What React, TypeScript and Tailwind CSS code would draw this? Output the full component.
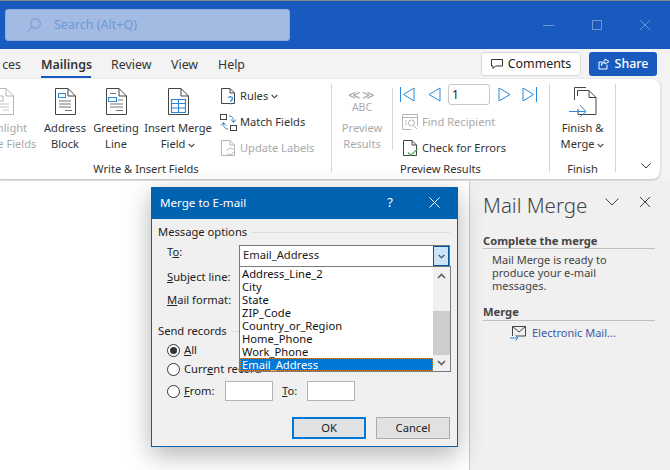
import React from 'react';

const DocIcon = ({ children, stroke = '#444' }: { children?: React.ReactNode; stroke?: string }) => (
  <svg width="21" height="27" viewBox="0 0 21 27" fill="none">
    <path d="M.5.5H13L20.5 8V26.5H.5Z" fill="#fff" stroke={stroke} />
    <path d="M13 .5V8H20.5" stroke={stroke} />
    {children}
  </svg>
);

const SmallDoc = ({ children, stroke = '#444' }: { children?: React.ReactNode; stroke?: string }) => (
  <svg width="17" height="17" viewBox="0 0 17 17" fill="none">
    <path d="M1.5.5H10L14.5 5V15.5H1.5Z" stroke={stroke} fill="#fff" />
    <path d="M10 .5V5H14.5" stroke={stroke} />
    {children}
  </svg>
);

const Caret = ({ color = '#444' }: { color?: string }) => (
  <svg width="7" height="5" viewBox="0 0 7 5" fill="none" className="inline-block">
    <path d="M.7 1L3.5 3.8 6.3 1" stroke={color} strokeWidth="1.1" />
  </svg>
);

const BigButton = ({ width, icon, lines, disabled }: { width: string; icon: React.ReactNode; lines: React.ReactNode[]; disabled?: boolean }) => (
  <div className={`${width} shrink-0 flex flex-col items-center pt-[9px] leading-[16px] ${disabled ? 'text-[#a9a9a9]' : 'text-[#333]'}`}>
    <div className="h-[27px]">{icon}</div>
    <div className="mt-[5px] flex flex-col items-center whitespace-nowrap">
      {lines.map((line, i) => (
        <span key={i}>{line}</span>
      ))}
    </div>
  </div>
);

const SmallRow = ({ icon, children, disabled }: { icon: React.ReactNode; children: React.ReactNode; disabled?: boolean }) => (
  <div className={`h-[26px] flex items-center gap-[3px] whitespace-nowrap ${disabled ? 'text-[#a9a9a9]' : 'text-[#333]'}`}>
    <span className="w-[18px] h-[18px] flex items-center justify-center shrink-0">{icon}</span>
    <span>{children}</span>
  </div>
);

const RibbonLabel = ({ children, className = '' }: { children: React.ReactNode; className?: string }) => (
  <div className={`h-[15px] leading-[15px] text-center text-[#333] whitespace-nowrap ${className}`}>{children}</div>
);

const Radio = ({ checked }: { checked?: boolean }) => (
  <span className="w-[13px] h-[13px] rounded-full border border-[#333] bg-white flex items-center justify-center shrink-0">
    {checked && <span className="w-[7px] h-[7px] rounded-full bg-[#333]" />}
  </span>
);

const listItems = ['Address_Line_2', 'City', 'State', 'ZIP_Code', 'Country_or_Region', 'Home_Phone', 'Work_Phone'];

const MergeDialog = () => (
  <div className="absolute left-[151px] top-[187px] w-[307px] h-[260px] bg-[#f0f0f0] border border-[#0063b1] shadow-[0_8px_24px_rgba(0,0,0,0.3)] flex flex-col text-[11.2px] text-[#222]">
    <div className="h-[31px] shrink-0 bg-[#0063b1] flex items-center pl-[8px] pb-[2px] text-[11.6px] text-white">
      <span className="flex-1">Merge to E-mail</span>
      <span className="w-[20px] text-center text-[13px]">?</span>
      <svg width="11" height="11" viewBox="0 0 11 11" className="ml-[29px] mr-[17px]">
        <path d="M.5.5L10.5 10.5M10.5.5L.5 10.5" stroke="#fff" />
      </svg>
    </div>
    <div className="flex-1 flex flex-col pl-[6px] pr-[7px]">
      <div className="flex items-center gap-[5px] h-[16px] mt-[5px]">
        <span>Message options</span>
        <span className="flex-1 h-px bg-[#dcdcdc]" />
      </div>
      <div className="flex mt-[5px] h-[22px]">
        <span className="w-[81px] pl-[9px] leading-[14px]">T<u>o</u>:</span>
        <div className="flex-1 border border-[#7a7a7a] bg-white flex items-center justify-between pl-[3px]">
          <span className="-mt-[2px]">Email_Address</span>
          <span className="w-[16px] h-[20px] bg-[#cce4f7] border border-[#005499] flex items-center justify-center">
            <Caret />
          </span>
        </div>
      </div>
      <div className="h-[23px] -mt-[2px] pl-[9px] leading-[23px]"><u>S</u>ubject line:</div>
      <div className="h-[23px] pl-[9px] leading-[23px]"><u>M</u>ail format:</div>
      <div className="flex items-center gap-[5px] h-[16px] mt-[12px]">
        <span>Send records</span>
        <span className="w-[20px] h-px bg-[#dcdcdc]" />
      </div>
      <div className="flex flex-col pl-[9px] mt-[2px]">
        <div className="h-[19px] flex items-center gap-[4px]">
          <Radio checked />
          <span><u>A</u>ll</span>
        </div>
        <div className="h-[19px] flex items-center gap-[4px]">
          <Radio />
          <span>Curr<u>e</u>nt record</span>
        </div>
        <div className="h-[22px] mt-[1px] flex items-center gap-[4px]">
          <Radio />
          <span className="w-[37px]"><u>F</u>rom:</span>
          <span className="w-[48px] h-[20px] bg-white border border-[#b4b4b4]" />
          <span className="w-[22px] ml-[5px] -mr-[1px]"><u>T</u>o:</span>
          <span className="w-[48px] h-[20px] bg-white border border-[#b4b4b4]" />
        </div>
      </div>
      <div className="flex justify-end gap-[10px] mt-[15px]">
        <span className="w-[74px] h-[22px] bg-[#e1e1e1] border-2 border-[#0078d7] flex items-center justify-center">OK</span>
        <span className="w-[74px] h-[22px] bg-[#e1e1e1] border border-[#adadad] flex items-center justify-center">Cancel</span>
      </div>
    </div>
    {/* open combo list */}
    <div className="absolute left-[87px] top-[78px] w-[212px] h-[106px] bg-white border border-[#7a7a7a] flex text-[11.2px] leading-[13px] text-[#111]">
      <div className="flex-1 flex flex-col">
        {listItems.map(item => (
          <div key={item} className="h-[13px] pl-[2px]">{item}</div>
        ))}
        <div className="h-[13px] pl-[2px] bg-[#0078d7] text-white outline-1 outline-dotted outline-[#e88a2a] -outline-offset-1">Email_Address</div>
      </div>
      <div className="w-[17px] bg-[#f0f0f0] flex flex-col items-center">
        <svg width="9" height="6" viewBox="0 0 9 6" className="mt-[6px] mb-[32px]">
          <path d="M1 5L4.5 1.5 8 5" stroke="#606060" strokeWidth="1.6" fill="none" />
        </svg>
        <span className="w-full h-[44px] bg-[#cdcdcd]" />
        <svg width="9" height="6" viewBox="0 0 9 6" className="mt-[5px]">
          <path d="M1 1L4.5 4.5 8 1" stroke="#606060" strokeWidth="1.6" fill="none" />
        </svg>
      </div>
    </div>
  </div>
);

export default function App() {
  return (
    <div className="relative w-[670px] h-[470px] overflow-hidden flex flex-col bg-white font-['Noto_Sans',sans-serif] text-[11.1px]">
      {/* title bar */}
      <div className="h-[49px] shrink-0 bg-[#185abd] border-t border-[#8a8a8a] flex items-center pl-[5px]">
        <div className="w-[285px] h-[32px] rounded-[3px] bg-[#a3bbe3] border border-[#8fabdc] flex items-center pl-[20px] gap-[13px] text-[#6f96d6] text-[12.5px]">
          <svg width="15" height="15" viewBox="0 0 15 15" fill="none">
            <circle cx="9.5" cy="5.5" r="4.8" stroke="#6f96d6" />
            <path d="M6 9L.7 14.3" stroke="#6f96d6" />
          </svg>
          <span>Search (Alt+Q)</span>
        </div>
        <div className="ml-auto flex items-center gap-[38px] pr-[20px]">
          <span className="w-[11px] h-px bg-[#6f96d6]" />
          <span className="w-[10px] h-[10px] border border-[#6f96d6]" />
          <svg width="10" height="10" viewBox="0 0 10 10">
            <path d="M0 0L10 10M10 0L0 10" stroke="#6f96d6" />
          </svg>
        </div>
      </div>

      {/* tab row */}
      <div className="h-[30px] shrink-0 bg-[#f3f3f3] flex items-center text-[12.4px] text-[#333]">
        <span className="w-[41px] pt-[2px] text-right pr-[20px] whitespace-nowrap overflow-hidden">ces</span>
        <span className="relative w-[70px] pt-[2px] font-semibold whitespace-nowrap">
          Mailings
          <span className="absolute left-0 top-[22px] w-[50px] h-[2px] bg-[#185abd]" />
        </span>
        <span className="w-[60px] pt-[2px]">Review</span>
        <span className="w-[47px] pt-[2px]">View</span>
        <span className="w-[263px] pt-[2px]">Help</span>
        <span className="w-[100px] h-[24px] bg-white border border-[#d9d9d9] rounded-[3px] flex items-center justify-center gap-[5px] text-[#222]">
          <svg width="12" height="12" viewBox="0 0 12 12" fill="none">
            <path d="M.5 1.5H11.5V8H4.5L2 10.5V8H.5Z" stroke="#333" />
          </svg>
          Comments
        </span>
        <span className="ml-[8px] w-[68px] h-[24px] bg-[#185abd] rounded-[3px] flex items-center justify-center gap-[5px] font-medium text-white">
          <svg width="12" height="12" viewBox="0 0 12 12" fill="none">
            <path d="M9 6.5V11H1V4H4M7 1L11 3.5 7 6V4.500C5 4.500 4 6 3.500 7.500 3.500 5 5 2.800 7 2.800Z" stroke="#fff" />
          </svg>
          Share
        </span>
      </div>

      {/* ribbon */}
      <div className="h-[102px] shrink-0 bg-[#f3f3f3]">
        <div className="w-[660px] h-[100px] bg-white rounded-r-lg shadow-[0_1px_3px_rgba(0,0,0,0.25)] flex overflow-hidden">
          <div className="-ml-[30px] w-[361px] shrink-0 flex flex-col">
            <div className="flex h-[82px]">
              <BigButton
                width="w-[66px]"
                disabled
                icon={
                  <DocIcon stroke="#b5b5b5">
                    <rect x="3" y="8" width="7" height="5" stroke="#b5b5b5" />
                    <path d="M5 16H16M5 19H16M10 22H16" stroke="#c5c5c5" />
                  </DocIcon>
                }
                lines={['Highlight', 'Merge Fields']}
              />
              <BigButton
                width="w-[58px]"
                icon={
                  <DocIcon>
                    <rect x="3.5" y="5.5" width="7" height="4" stroke="#2b88d8" />
                    <path d="M4 13H16M4 16H16M4 19H16M10 22.5H17" stroke="#777" />
                  </DocIcon>
                }
                lines={['Address', 'Block']}
              />
              <BigButton
                width="w-[44px]"
                icon={
                  <DocIcon>
                    <rect x="2.5" y="9.5" width="8" height="4" stroke="#2b88d8" />
                    <path d="M4 5.5H10M12 12H17M4 16H17M4 19H17M10 22.5H17" stroke="#777" />
                  </DocIcon>
                }
                lines={['Greeting', 'Line']}
              />
              <BigButton
                width="w-[80px]"
                icon={
                  <DocIcon>
                    <path d="M3.5 11.5H17.5V24.5H3.5ZM3.5 15.5H17.5M3.5 20H17.5M10.5 11.5V24.5" stroke="#2b88d8" strokeWidth="1.2" />
                  </DocIcon>
                }
                lines={['Insert Merge', <span key="f">Field <Caret /></span>]}
              />
              <div className="pt-[4px] pl-[1px]">
                <SmallRow
                  icon={
                    <SmallDoc>
                      <path d="M8.5 10C8.5 8 12.5 8 12.5 10.5 12.5 12 10.5 12 10.5 14M10.5 15V16.5" stroke="#2b88d8" strokeWidth="1.2" />
                    </SmallDoc>
                  }
                >
                  Rules <Caret />
                </SmallRow>
                <SmallRow
                  icon={
                    <svg width="17" height="17" viewBox="0 0 17 17" fill="none">
                      <rect x=".5" y=".5" width="6" height="5" stroke="#444" />
                      <rect x="10.5" y="11.5" width="6" height="5" stroke="#444" />
                      <path d="M9 2C12 2 13.5 3.5 13.5 8M11 5.5L13.5 8.5 16 5.5M8 15C5 15 3.5 13 3.5 9M1 11.5L3.5 8.5 6 11.5" stroke="#2b88d8" />
                    </svg>
                  }
                >
                  Match Fields
                </SmallRow>
                <SmallRow
                  disabled
                  icon={
                    <SmallDoc stroke="#b5b5b5">
                      <path d="M7 11C7 8 12 7 13.5 10M13.5 12C13 15 8 15.5 7 13" stroke="#b5b5b5" />
                    </SmallDoc>
                  }
                >
                  Update Labels
                </SmallRow>
              </div>
            </div>
            <RibbonLabel className="pr-[9px]">Write &amp; Insert Fields</RibbonLabel>
          </div>
          <div className="w-px h-[88px] mt-[5px] bg-[#d6d6d6] shrink-0" />

          <div className="w-[217px] shrink-0 flex flex-col">
            <div className="flex h-[82px]">
              <div className="w-[60px] shrink-0 flex flex-col items-center pt-[10px] text-[#a9a9a9] leading-[16px]">
                <span className="text-[12px] leading-[12px] tracking-[1px]">≪≫</span>
                <span className="text-[10.5px] leading-[13px]">ABC</span>
                <span className="mt-[6px]">Preview</span>
                <span>Results</span>
              </div>
              <div className="w-px h-[62px] mt-[9px] bg-[#d6d6d6] shrink-0" />
              <div className="pl-[7px] pt-[4px] flex-1">
                <div className="h-[26px] flex items-start pt-[1px]">
                  <svg width="15" height="15" viewBox="0 0 15 15" fill="none" className="mt-[3px] mr-[13px]">
                    <path d="M.5 0V15M14 1L3.5 7.5 14 14Z" stroke="#2b88d8" />
                  </svg>
                  <svg width="13" height="15" viewBox="0 0 13 15" fill="none" className="mt-[3px] mr-[7px]">
                    <path d="M12 1L1 7.5 12 14Z" stroke="#2b88d8" />
                  </svg>
                  <span className="w-[42px] h-[21px] border border-[#c8c8c8] rounded-[3px] pl-[3px] leading-[19px] text-[#222] text-[12px]">1</span>
                  <svg width="13" height="15" viewBox="0 0 13 15" fill="none" className="mt-[3px] ml-[8px]">
                    <path d="M1 1L12 7.5 1 14Z" stroke="#2b88d8" />
                  </svg>
                  <svg width="15" height="15" viewBox="0 0 15 15" fill="none" className="mt-[3px] ml-[11px]">
                    <path d="M14.5 0V15M1 1L11.500 7.500 1 14Z" stroke="#2b88d8" />
                  </svg>
                </div>
                <div className="pl-[1px]">
                  <SmallRow
                    disabled
                    icon={
                      <svg width="16" height="16" viewBox="0 0 16 16" fill="none">
                        <path d="M.5.5H15.500V12M.5.5V15.500H9M.5 3.500H15.500" stroke="#b5b5b5" />
                        <circle cx="9.500" cy="9" r="3" stroke="#b5b5b5" />
                        <path d="M11.500 11.500L15 15M3 7H5M3 10H5" stroke="#b5b5b5" />
                      </svg>
                    }
                  >
                    Find Recipient
                  </SmallRow>
                  <SmallRow
                    icon={
                      <SmallDoc>
                        <path d="M6 12.500L8.500 15.500 15.500 9" stroke="#4caf50" strokeWidth="1.2" />
                      </SmallDoc>
                    }
                  >
                    Check for Errors
                  </SmallRow>
                </div>
              </div>
            </div>
            <RibbonLabel>Preview Results</RibbonLabel>
          </div>
          <div className="w-px h-[88px] mt-[5px] bg-[#d6d6d6] shrink-0" />

          <div className="w-[65px] shrink-0 flex flex-col">
            <div className="h-[82px] flex flex-col items-center pt-[8px] text-[#333] leading-[16px]">
              <svg width="28" height="30" viewBox="0 0 28 30" fill="none">
                <path d="M5.500 13V.5H17M8.500 9V3.500H20L27 10.500V27.500H9V22" stroke="#444" fill="none" />
                <path d="M20 3.500V10.500H27" stroke="#444" />
                <path d="M0 24.500H16M11 18L17 24.500 11 30" stroke="#2b88d8" />
              </svg>
              <span className="mt-[3px]">Finish &amp;</span>
              <span>Merge <Caret /></span>
            </div>
            <RibbonLabel>Finish</RibbonLabel>
          </div>
          <div className="w-px h-[88px] mt-[5px] bg-[#d6d6d6] shrink-0" />
          <div className="flex-1 flex items-end justify-center pb-[10px] pl-[16px]">
            <svg width="10" height="6" viewBox="0 0 10 6" fill="none">
              <path d="M.5.5L5 5 9.500.5" stroke="#333" />
            </svg>
          </div>
        </div>
      </div>

      {/* document + task pane */}
      <div className="flex-1 flex min-h-0">
        <div className="flex-1 bg-white" />
        <div className="w-[201px] shrink-0 bg-[#f0f0f0] border-l border-[#c8c8c8] pl-[13px] pr-[20px] text-[#444]">
          <div className="h-[44px] flex items-center text-[#444]">
            <span className="flex-1 text-[20.5px] font-light leading-[36px] mt-[3px]">Mail Merge</span>
            <svg width="14" height="8" viewBox="0 0 14 8" fill="none" className="mr-[21px] mb-[2px]">
              <path d="M.5.5L7 7 13.500.5" stroke="#444" />
            </svg>
            <svg width="10" height="10" viewBox="0 0 10 10" fill="none" className="mb-[2px]">
              <path d="M0 0L10 10M10 0L0 10" stroke="#444" />
            </svg>
          </div>
          <div className="-mr-[5px] mt-[9px] font-bold text-[11.2px] leading-[14px] border-b border-[#c0c0c0]">Complete the merge</div>
          <div className="pl-[9px] pt-[4px] leading-[13px] text-[11px]">
            Mail Merge is ready to
            <br />
            produce your e-mail
            <br />
            messages.
          </div>
          <div className="-mr-[5px] mt-[13px] font-bold text-[11.2px] leading-[14px] border-b border-[#c0c0c0] pb-[1px]">Merge</div>
          <div className="flex items-center gap-[6px] pl-[27px] mt-[4px] text-[#3a5aa8] text-[11px]">
            <svg width="16" height="15" viewBox="0 0 16 15" fill="none">
              <path d="M2.500 10V.5H15.500V10H6M2.500.5L9 6 15.500.5" stroke="#444" />
              <path d="M0 12H8M5.500 9.500L8 12 5.500 14.500" stroke="#2b88d8" />
            </svg>
            <span>Electronic Mail...</span>
          </div>
        </div>
      </div>

      <MergeDialog />
    </div>
  );
}
